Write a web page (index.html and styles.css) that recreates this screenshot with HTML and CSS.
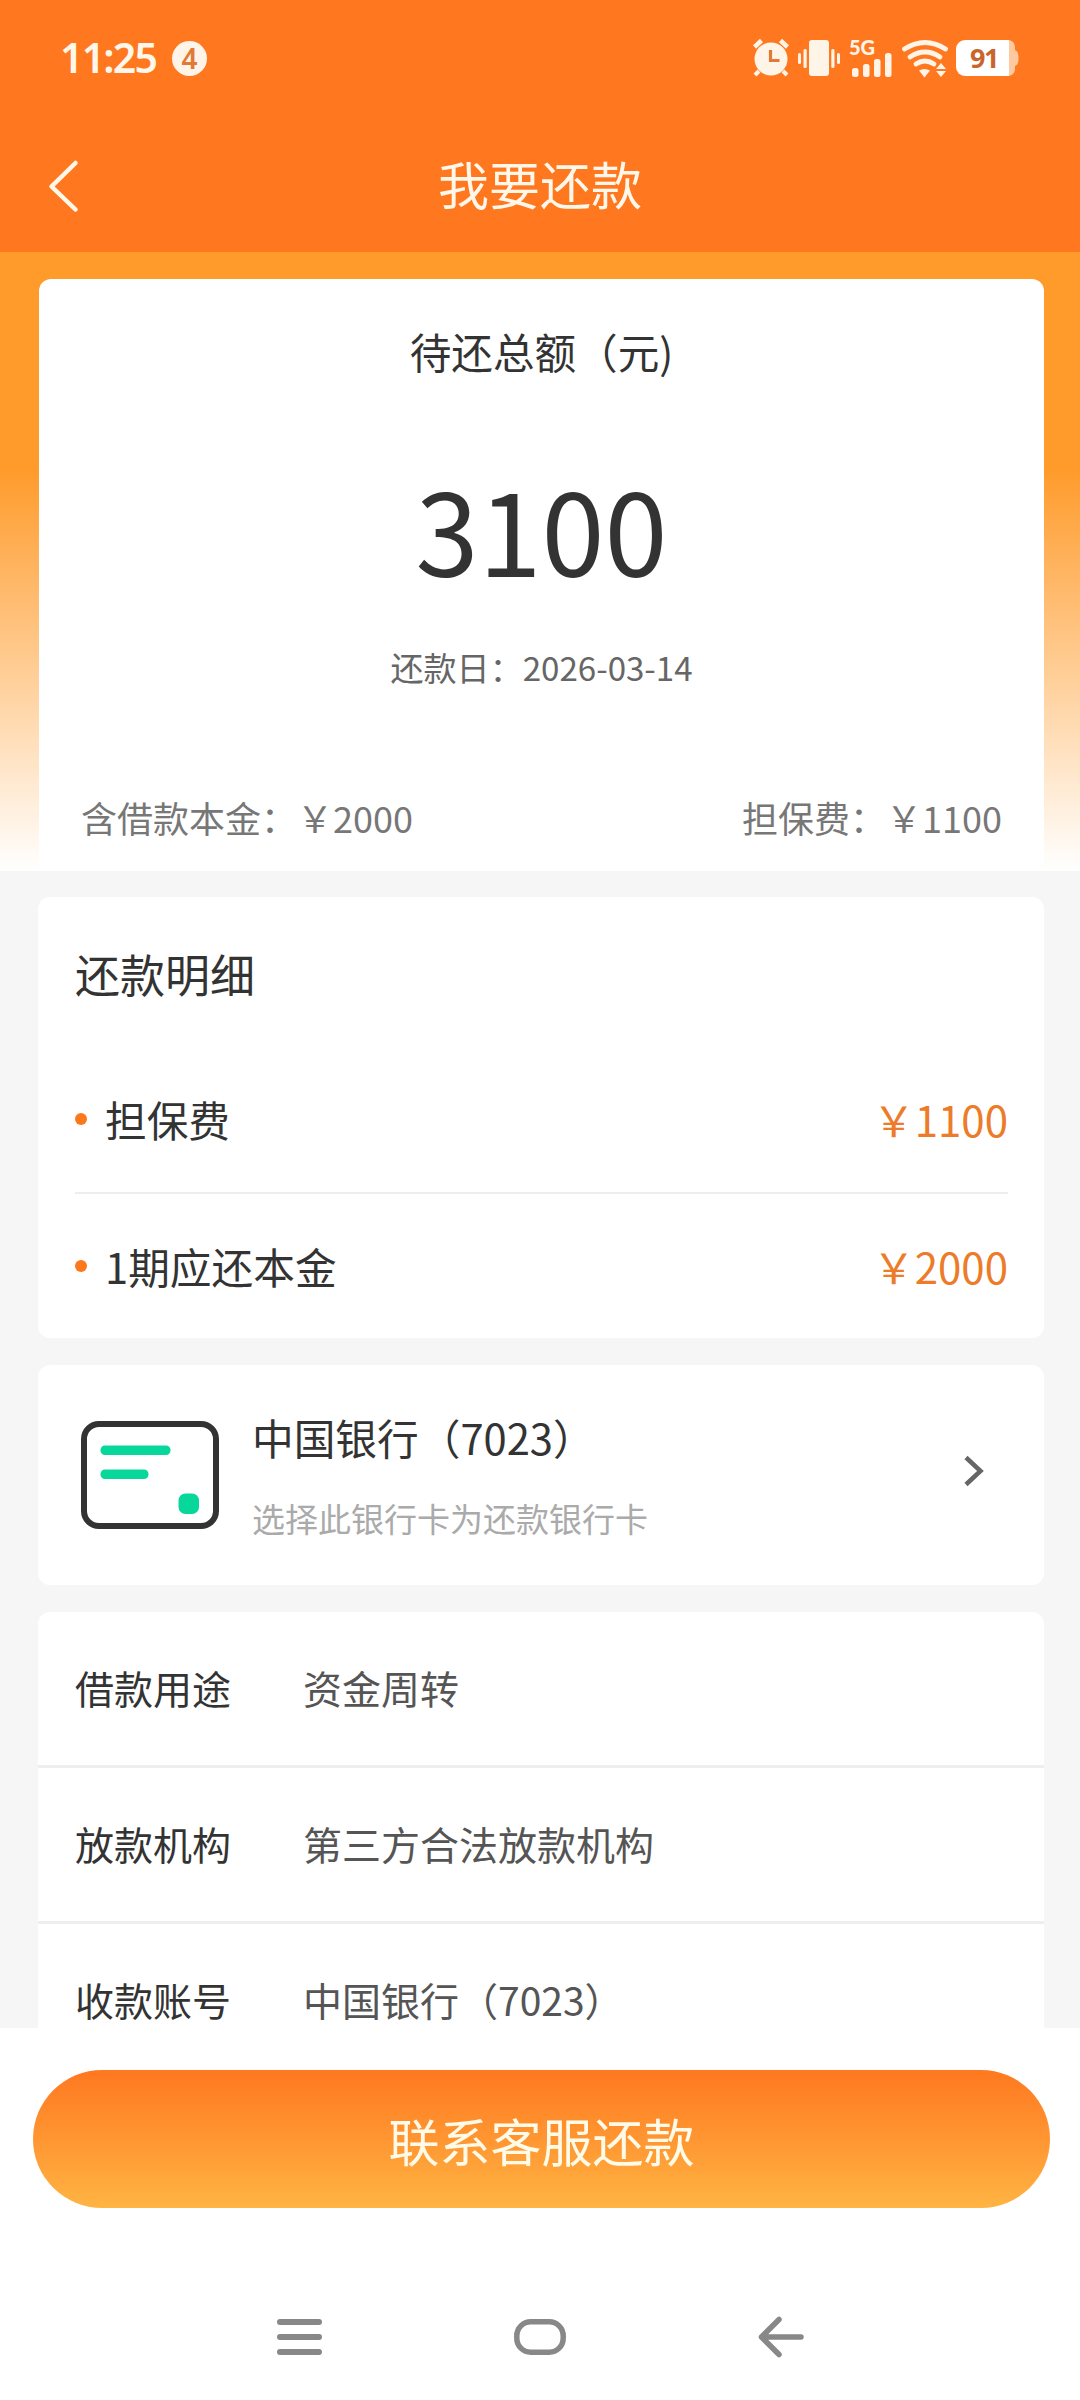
FILE: index.html
```html
<!DOCTYPE html>
<html lang="zh-CN">
<head>
<meta charset="utf-8">
<title>我要还款</title>
<link rel="stylesheet" href="styles.css">
</head>
<body>
<div class="screen">
  <header class="header">
    <div class="status">
      <span class="clock">11:25</span>
      <span class="count">4</span>
      <svg class="status-icons" width="276" height="44" viewBox="0 0 276 44" fill="#fff4e8">
        <g>
          <circle cx="20" cy="23" r="16.5"/>
          <path d="M3.500 11l7-6.500M36.500 11l-7-6.500" stroke="#fff4e8" stroke-width="4.500" fill="none"/>
          <path d="M8 35l-4 4M32 35l4 4" stroke="#fff4e8" stroke-width="4" fill="none"/>
          <path d="M19.500 14v10.500h9" stroke="#e07a34" stroke-width="3.200" fill="none"/>
        </g>
        <g>
          <rect x="58" y="4" width="20" height="36" rx="3"/>
          <rect x="52.500" y="13" width="3.200" height="19" rx="1.500"/>
          <rect x="80.300" y="13" width="3.200" height="19" rx="1.500"/>
          <rect x="47" y="17" width="3" height="11" rx="1.500"/>
          <rect x="86" y="17" width="3" height="11" rx="1.500"/>
        </g>
        <g>
          <text class="net" x="98" y="19">5G</text>
          <rect x="101" y="32" width="6.500" height="9" rx="2.500"/>
          <rect x="112" y="28" width="6.500" height="13" rx="2.500"/>
          <rect x="123" y="23" width="6.500" height="18" rx="2.500"/>
          <rect x="134" y="17" width="6.500" height="24" rx="2.500"/>
        </g>
        <g>
          <path d="M153.500 13q20.500-13 41 0" fill="none" stroke="#fff4e8" stroke-width="4.800" stroke-linecap="round"/>
          <path d="M159 21q15-10 30 0" fill="none" stroke="#fff4e8" stroke-width="4.800" stroke-linecap="round"/>
          <path d="M165 28q9-6 18 0" fill="none" stroke="#fff4e8" stroke-width="4.800" stroke-linecap="round"/>
          <path d="M168 34.500q5.500-3 11 0l-5.500 7z"/>
          <path d="M190 27l5 6h-10zM190 41l5-6h-10z"/>
        </g>
        <g>
          <path d="M255 4h2a7 7 0 0 1 7 7v3q3.500 1 3.500 8t-3.500 8v3a7 7 0 0 1-7 7h-2z" fill="#ffc9a0"/>
          <path d="M214 4h44v36h-44a9 9 0 0 1-9-9v-18a9 9 0 0 1 9-9z" fill="#fff"/>
          <text class="level" x="219" y="32">91</text>
        </g>
      </svg>
    </div>
    <div class="titlebar">
      <svg class="back" width="34" height="56" viewBox="0 0 34 56" fill="none" stroke="#fff8ea" stroke-width="4.500" stroke-linecap="round" stroke-linejoin="round"><path d="M29.500 5L5.500 28.500L29.500 51.500"/></svg>
      <h1 class="title">我要还款</h1>
    </div>
  </header>

  <main class="content">
    <section class="hero">
      <div class="card summary">
        <div class="summary-label">待还总额（元)</div>
        <div class="summary-amount">3100</div>
        <div class="summary-date">还款日：2026-03-14</div>
        <div class="summary-split"><span>含借款本金：￥2000</span><span>担保费：￥1100</span></div>
      </div>
    </section>

    <section class="card detail">
      <h2 class="detail-title">还款明细</h2>
      <div class="detail-row"><i class="dot"></i><span class="name">担保费</span><span class="fee">￥1100</span></div>
      <div class="detail-row"><i class="dot"></i><span class="name">1期应还本金</span><span class="fee">￥2000</span></div>
    </section>

    <section class="card bank">
      <svg class="bank-icon" width="138" height="108" viewBox="0 0 138 108">
        <rect x="3" y="3" width="132" height="102" rx="15" fill="none" stroke="#333" stroke-width="6"/>
        <g fill="#08d79c"><rect x="19.500" y="24.500" width="70" height="9.500" rx="4.500"/><rect x="19.500" y="48.500" width="48" height="9.500" rx="4.500"/><rect x="97.500" y="72.500" width="20.500" height="20.500" rx="7"/></g>
      </svg>
      <div class="bank-text">
        <div class="bank-name">中国银行（7023）</div>
        <div class="bank-hint">选择此银行卡为还款银行卡</div>
      </div>
      <svg class="chevron" width="24" height="34" viewBox="0 0 24 34" fill="none" stroke="#666" stroke-width="4.500"><path d="M4 3.500L18.500 17L4 30.500"/></svg>
    </section>

    <section class="card info">
      <div class="info-row"><span class="key">借款用途</span><span class="value">资金周转</span></div>
      <div class="info-row"><span class="key">放款机构</span><span class="value">第三方合法放款机构</span></div>
      <div class="info-row"><span class="key">收款账号</span><span class="value">中国银行（7023）</span></div>
    </section>
  </main>

  <footer class="footer">
    <button class="submit" type="button">联系客服还款</button>
    <nav class="nav">
      <svg width="52" height="44" viewBox="0 0 52 44" fill="none" stroke="#888" stroke-width="6" stroke-linecap="round"><path d="M6 7h39M6 22h39M6 37h39"/></svg>
      <svg width="52" height="44" viewBox="0 0 52 44" fill="none" stroke="#888" stroke-width="5.500"><rect x="2.800" y="6.800" width="46.400" height="30.400" rx="14"/></svg>
      <svg width="52" height="44" viewBox="0 0 52 44" fill="none" stroke="#888" stroke-width="5.500" stroke-linecap="round" stroke-linejoin="round"><path d="M47 22H7.500M25 4.500L7.500 22L25 39.500"/></svg>
    </nav>
  </footer>
</div>
</body>
</html>
```
FILE: styles.css
```css
* { box-sizing: border-box; }

body {
  margin: 0;
  font-family: "Noto Sans CJK SC", sans-serif;
  color: #333;
  background: #fff;
}

.screen {
  width: 1080px;
  height: 2400px;
  display: flex;
  flex-direction: column;
  overflow: hidden;
}

/* header */
.header { height: 252px; flex: none; background: #ff781f; color: #fff8ea; }

.status { height: 116px; padding: 0 51px 0 60px; display: flex; align-items: center; }
.clock {
  width: 112px;
  padding-bottom: 2px;
  font: 600 41px/50px "Noto Sans", sans-serif;
  letter-spacing: -1.8px;
}
.count {
  width: 35px;
  height: 35px;
  border-radius: 50%;
  background: #fff4e8;
  color: #e07a34;
  font: 600 28px/35px "Noto Sans", sans-serif;
  text-align: center;
}
.status-icons { margin-left: auto; margin-right: 2px; }
.net { font: 900 20px Lato, sans-serif; }
.level { font: 700 27px "Noto Sans", sans-serif; letter-spacing: -1.5px; fill: #c9652c; }

.titlebar {
  display: grid;
  grid-template-columns: 1fr auto 1fr;
  align-items: center;
  padding: 0 46px;
  height: 140px;
}
.title { margin: 0; padding-bottom: 6px; font-size: 51px; line-height: 70px; font-weight: 400; }

/* content */
.content {
  height: 1776px;
  flex: none;
  overflow: hidden;
  display: flex;
  flex-direction: column;
  background: #f6f6f7;
}
.card { background: #fff; border-radius: 12px; flex: none; margin: 0 36px 27px 38px; }

.hero {
  flex: none;
  height: 619px;
  margin-bottom: 26px;
  padding-top: 27px;
  background: linear-gradient(#ff9b2b 0%, #ff9b2b 35%, #fff 100%);
}
.summary { height: 592px; padding-top: 42px; text-align: center; margin: 0 36px 0 39px; display: flex; flex-direction: column; }
.summary-label { font-size: 41.6px; line-height: 60px; }
.summary-amount { font-size: 113.5px; line-height: 140px; margin-top: 77px; }
.summary-date { font-size: 33.1px; line-height: 50px; margin-top: 44px; color: #666; }
.summary-split {
  display: flex;
  justify-content: space-between;
  padding: 0 42px;
  margin-top: 100px;
  font-size: 36px;
  line-height: 50px;
  color: #777;
}

.detail { height: 441px; padding: 42px 36px 0 37px; }
.detail-title { margin: 0 0 37px; font-size: 45px; line-height: 70px; font-weight: 400; }
.detail-row { height: 146px; display: flex; align-items: center; font-size: 41.7px; }
.detail-row + .detail-row { border-top: 2px solid #eee; }
.dot { width: 12px; height: 12px; border-radius: 50%; background: #fb781d; margin-right: 18px; }
.fee { margin-left: auto; padding-bottom: 1px; font-size: 42px; color: #ec7b2a; }

.bank { height: 220px; display: flex; align-items: center; padding: 0 58px 0 43px; }
.bank-text { margin-left: 33px; }
.bank-name { font-size: 41.7px; line-height: 60px; }
.bank-hint { font-size: 33px; line-height: 50px; margin-top: 26px; color: #aaa; }
.chevron { margin-left: auto; margin-bottom: 8px; }

.info { padding-bottom: 40px; }
.info-row { height: 156px; padding: 0 0 3px 37px; display: flex; align-items: center; font-size: 39px; }
.info-row:first-child { height: 153px; padding-bottom: 4px; }
.info-row + .info-row { border-top: 3px solid #eee; }
.key { width: 228px; }
.value { color: #555; }

/* footer */
.footer { flex: 1; padding: 42px 30px 0 33px; background: #fff; }
.submit {
  display: block;
  width: 100%;
  height: 138px;
  padding: 1px 0 0;
  border: 0;
  border-radius: 69px;
  background: linear-gradient(#ff7820, #ffb443);
  color: #fffbe8;
  font: 400 51px/70px "Noto Sans CJK SC", sans-serif;
}
.nav { display: flex; justify-content: center; gap: 188px; margin-top: 107px; padding-right: 3px; }
```
